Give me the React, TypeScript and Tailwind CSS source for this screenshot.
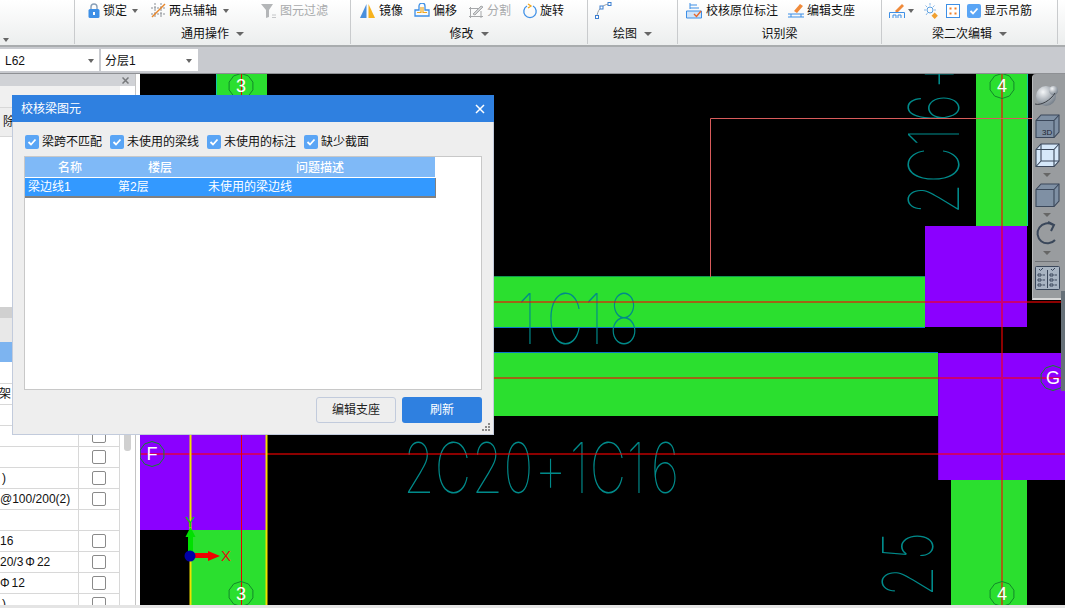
import type { ReactNode } from "react";

const Caret = ({ className = "" }: { className?: string }) => (
  <span className={`inline-block w-0 h-0 border-x-[3px] border-x-transparent border-t-[4px] border-t-[#666] ${className}`} />
);

const Check = ({ className = "" }: { className?: string }) => (
  <span className={`inline-flex w-[14px] h-[14px] shrink-0 items-center justify-center rounded-[2px] bg-[#5aa5f5] ${className}`}>
    <svg width="10" height="10" viewBox="0 0 10 10" fill="none" stroke="#fff" strokeWidth="1.8">
      <path d="M1.5 5l2.5 2.5 4.5-5" />
    </svg>
  </span>
);

const Group = ({ width, label, caret, pad, children }: { width: string; label?: string; caret?: boolean; pad: string; children?: ReactNode }) => (
  <div className={`${width} h-[44px] shrink-0 flex flex-col border-r border-r-[#c9cbcd]`}>
    <div className={`h-[21px] shrink-0 flex items-center ${pad}`}>{children}</div>
    <div className="h-[26px] shrink-0 flex items-center justify-center">
      {label && <span>{label}</span>}
      {caret && <Caret className="ml-[7px] border-x-[4px]" />}
    </div>
  </div>
);

const LockIcon = () => (
  <svg width="12" height="15" viewBox="0 0 12 15">
    <path d="M3 6V4a3 3 0 016 0v2" fill="none" stroke="#8aa0b8" strokeWidth="1.4" />
    <rect x="0.5" y="6" width="11" height="9" rx="1.5" fill="#3d8fe6" />
    <rect x="5" y="9" width="2" height="3" fill="#fff" />
  </svg>
);

const AxisIcon = () => (
  <svg width="15" height="15" viewBox="0 0 15 15" fill="none" strokeWidth="1">
    <path d="M0 5h15M0 11h15M4 0v15M10 0v15" stroke="#8a8f96" strokeDasharray="2 1" />
    <path d="M1 14L14 1" stroke="#e8862a" strokeWidth="1.4" />
  </svg>
);

const FilterIcon = () => (
  <svg width="16" height="16" viewBox="0 0 16 16">
    <path d="M0 1h12L8 7v7l-3 1V7z" fill="#b4b6b8" />
    <path d="M11 12h4M11 14.5h4" stroke="#c4c6c8" />
  </svg>
);

const MirrorIcon = () => (
  <svg width="15" height="15" viewBox="0 0 15 15">
    <path d="M6.5 1v14H0z" fill="#4a8fdc" />
    <path d="M8.5 1v14H15z" fill="#f7b21c" />
  </svg>
);

const OffsetIcon = () => (
  <svg width="16" height="15" viewBox="0 0 16 15" fill="none">
    <path d="M5 7V3a3 3 0 016 0v4h4v6H1V7z" stroke="#3d8fe6" strokeWidth="1.3" />
    <path d="M3 9.5h4V4M9 4v5.5h4" stroke="#f0a820" strokeWidth="1.2" />
  </svg>
);

const SplitIcon = () => (
  <svg width="16" height="15" viewBox="0 0 16 15" fill="none" stroke="#a6a8aa">
    <path d="M1 5.5h11M1 13.5h14M2.5 4v11M13 8v7" />
    <path d="M5 11l8-8 2 1-8 8z" fill="#d0d2d4" />
  </svg>
);

const RotateIcon = () => (
  <svg width="16" height="16" viewBox="0 0 16 16" fill="none">
    <path d="M11 3a6.2 6.2 0 11-6 0" stroke="#3d8fe6" strokeWidth="1.3" />
    <path d="M6 1L9 3 6 5" stroke="#f0a820" strokeWidth="1.3" />
  </svg>
);

const ArcIcon = () => (
  <svg width="17" height="17" viewBox="0 0 17 17" fill="none">
    <path d="M2 15C2 9 6 3 14 2" stroke="#9aa0a6" />
    <rect x="0.5" y="13.5" width="3" height="3" fill="#fff" stroke="#3d7fd0" />
    <rect x="5" y="4" width="3" height="3" fill="#fff" stroke="#3d7fd0" />
    <rect x="13" y="0.5" width="3" height="3" fill="#fff" stroke="#3d7fd0" />
  </svg>
);

const CheckBeamIcon = () => (
  <svg width="16" height="17" viewBox="0 0 16 17" fill="none">
    <path d="M4 1v6M4 3h7M4 6h9" stroke="#3d8fe6" />
    <path d="M0.5 9h15v7H0.5z" fill="#cfe3f8" stroke="#3d8fe6" />
    <path d="M8 12l2.5 2.5L15 9" stroke="#e8662a" strokeWidth="1.4" />
  </svg>
);

const SupportIcon = () => (
  <svg width="16" height="16" viewBox="0 0 16 16" fill="none">
    <path d="M6 8l6-7 3 2-6 7z" fill="#f08a3a" />
    <path d="M0 11h16M0 14h16" stroke="#3d8fe6" />
    <path d="M3 11v3M13 11v3" stroke="#3d8fe6" />
  </svg>
);

const BrushBeamIcon = () => (
  <svg width="16" height="16" viewBox="0 0 16 16" fill="none">
    <path d="M6 8l7-7 2 2-7 7z" fill="#f08a3a" />
    <path d="M0.5 15V9.5h15V15M4 15v-3h3v3M9 15v-3h3v3" stroke="#3d8fe6" />
  </svg>
);

const SparkIcon = () => (
  <svg width="15" height="16" viewBox="0 0 15 16" fill="none">
    <circle cx="7" cy="7" r="3" stroke="#5a9fe0" />
    <path d="M7 0v2.5M1 7H3M11 7h2M2.5 2.5L4 4M11.5 2.5L10 4M3 12l1.5-2" stroke="#8ab8e8" />
    <rect x="9.5" y="10.5" width="4.5" height="4.5" transform="rotate(45 11.7 12.7)" fill="#f0a030" />
  </svg>
);

const DotsIcon = () => (
  <svg width="14" height="14" viewBox="0 0 14 14">
    <rect x="0.5" y="0.5" width="13" height="13" fill="#fff" stroke="#3d8fe6" />
    <rect x="3.5" y="3.5" width="2" height="2" fill="#f0802a" />
    <rect x="8.5" y="3.5" width="2" height="2" fill="#f0802a" />
    <rect x="3.5" y="8.5" width="2" height="2" fill="#f0802a" />
    <rect x="8.5" y="8.5" width="2" height="2" fill="#f0802a" />
  </svg>
);

const Cube = ({ tone, children }: { tone: string; children?: ReactNode }) => (
  <svg width="25" height="24" viewBox="0 0 25 24" fill={tone} stroke="#3a475a" strokeWidth="1.1">
    <path d="M1 6.5L6 1h18v17l-5 5.5H1z" />
    <path d="M1 6.5h18v17M19 6.5L24 1" fill="none" />
    {children}
  </svg>
);

const tableRows: { text?: ReactNode; check?: boolean }[] = [
  {},
  { text: <span className="-ml-[1px]">架</span> },
  {},
  { check: true },
  { check: true },
  { text: <span className="ml-[2px]">)</span>, check: true },
  { text: "@100/200(2)", check: true },
  {},
  { text: "16", check: true },
  { text: <>20/3<span className="mx-[2px]">Φ</span>22</>, check: true },
  { text: <><span className="mr-[2px]">Φ</span>12</>, check: true },
  { text: <span className="ml-[2px]">)</span>, check: true },
];

// the axis bubbles are drawn as ten sided polygons by the CAD view
const bubblePoints = (x: number, y: number) =>
  Array.from({ length: 10 }, (_, i) => {
    const a = (i * Math.PI) / 5 + Math.PI / 10;
    return `${(x + 12.5 * Math.cos(a)).toFixed(1)},${(y + 12.5 * Math.sin(a)).toFixed(1)}`;
  }).join(" ");

const GridCircle = ({ x, y, label }: { x: number; y: number; label: string }) => (
  <g>
    <polygon points={bubblePoints(x, y)} fill="none" stroke="#13882a" />
    <text x={x} y={y + 6} textAnchor="middle" fontSize="18" fill="#fff" className="font-['Liberation_Sans',sans-serif]">{label}</text>
  </g>
);

// centers = middle of each glyph along the baseline, measured from the reference
const CadLabel = ({ x, y, centers, rotate, children }: { x: number; y: number; centers: number[]; rotate?: boolean; children: string }) => (
  <g transform={`translate(${x} ${y}) ${rotate ? "rotate(-90)" : ""} scale(0.72 1)`}>
    <text
      x={centers.map((c) => (c / 0.72).toFixed(1)).join(" ")}
      y="0"
      fontSize="70"
      fill="#008a8a"
      textAnchor="middle"
      className="font-['Inter',sans-serif] font-thin"
    >
      {children}
    </text>
  </g>
);

const CadDrawing = () => (
  <svg className="absolute inset-0 w-full h-full" viewBox="140 74 925 531">
    <rect x="216" y="74" width="51" height="30" fill="#2bdf2f" />
    <rect x="976" y="74" width="51" height="152" fill="#2bdf2f" />
    <rect x="925" y="226" width="102" height="101" fill="#8b00ff" />
    <rect x="494" y="277" width="431" height="50" fill="#2bdf2f" />
    <rect x="494" y="353" width="444" height="63" fill="#2bdf2f" />
    <rect x="938" y="353" width="127" height="127" fill="#8b00ff" />
    <rect x="951" y="480" width="76" height="125" fill="#2bdf2f" />
    <rect x="140" y="430" width="126" height="100" fill="#8b00ff" />
    <rect x="190" y="530" width="76" height="75" fill="#2bdf2f" />

    <path d="M494 327.5H925M494 352.5H938" stroke="#0a78c8" />
    <path d="M494 276.5H925" stroke="#129a50" />
    <path d="M216.5 74V96M1027.5 74V226" stroke="#12c8a8" />
    <path d="M938.5 353V480" stroke="#6a00d8" />

    <CadLabel x={0} y={344} centers={[527, 565, 594, 624]}>1C18</CadLabel>
    <CadLabel x={0} y={493} centers={[419, 453, 487.5, 518.5, 550.5, 579, 608, 636, 665]}>2C20+1C16</CadLabel>
    <CadLabel x={959} y={212} centers={[13, 47, 75, 104, 138]} rotate>2C16+</CadLabel>
    <CadLabel x={933} y={628} centers={[47, 82]} rotate>25</CadLabel>

    <path d="M140 302H1065M140 378H1065M140 454H1065M1002 74V605" stroke="#ff0000" strokeOpacity="0.55" strokeWidth="2" />
    <path d="M241.5 74V605" stroke="#e80000" />
    <path d="M710.5 277V118.5H1040" fill="none" stroke="#d85c5c" />
    <path d="M190.5 430V605M266.5 430V605" stroke="#f0e000" strokeWidth="2" />

    <GridCircle x={241} y={86} label="3" />
    <GridCircle x={1002} y={86} label="4" />
    <GridCircle x={241} y={594} label="3" />
    <GridCircle x={1002} y={594} label="4" />
    <GridCircle x={152} y={454} label="F" />
    <GridCircle x={1053} y={378} label="G" />

    <path d="M188 537h5v18h-5z" fill="#00e000" />
    <path d="M190.5 527l5 10h-10z" fill="#00e000" />
    <path d="M195 553h13v5h-13z" fill="#f00000" />
    <path d="M208 551l12 5-12 5z" fill="#f00000" />
    <circle cx="190" cy="556" r="5.5" fill="#0000a8" />
    <text x="185" y="527" fontSize="15" fill="#00d000" className="font-['Liberation_Sans',sans-serif]">Y</text>
    <text x="221" y="561" fontSize="15" fill="#e01010" className="font-['Liberation_Sans',sans-serif]">X</text>
  </svg>
);

const ViewToolbar = () => (
  <div className="absolute right-0 top-0 w-[33px] h-[226px] bg-[#999c9f] rounded-tl-[4px] border-l border-l-[#b8babc] border-b-2 border-b-[#d8d8d8] flex flex-col items-center pr-[4px] pt-[9px]">
    <svg width="26" height="24" viewBox="0 0 26 24" className="shrink-0">
      <defs>
        <radialGradient id="ball" cx="0.35" cy="0.3" r="0.8">
          <stop offset="0" stopColor="#f4f6f8" />
          <stop offset="1" stopColor="#6a7480" />
        </radialGradient>
      </defs>
      <circle cx="12" cy="13" r="10" fill="url(#ball)" />
      <circle cx="19.5" cy="7.5" r="4.5" fill="url(#ball)" />
      <path d="M1 21c6 2 16-4 20-11" fill="none" stroke="#3a3f46" />
    </svg>
    <div className="mt-[7px] flex shrink-0">
      <Cube tone="#7f90a4">
        <text x="7" y="21" fontSize="8" fill="#1c2530" stroke="none" className="font-['Liberation_Sans',sans-serif]">3D</text>
      </Cube>
    </div>
    <div className="mt-[5px] flex shrink-0">
      <Cube tone="#d6e8fa">
        <path d="M6 1v17h18M6 18L1 23.5" fill="none" />
      </Cube>
    </div>
    <Caret className="mt-[6px] shrink-0 border-x-[4px] border-t-[4px] border-t-[#2f3a48]" />
    <div className="mt-[6px] flex shrink-0">
      <Cube tone="#7f90a4" />
    </div>
    <Caret className="mt-[6px] shrink-0 border-x-[4px] border-t-[4px] border-t-[#2f3a48]" />
    <svg width="24" height="24" viewBox="0 0 24 24" fill="none" stroke="#3a475a" strokeWidth="2" className="mt-[4px] shrink-0">
      <path d="M20 19A10 10 0 1118 4" />
      <path d="M13 1l6 3-3 6" />
    </svg>
    <Caret className="mt-[6px] shrink-0 border-x-[4px] border-t-[4px] border-t-[#2f3a48]" />
    <div className="mt-[6px] w-[24px] h-px shrink-0 bg-[#6f7276]" />
    <svg width="25" height="24" viewBox="0 0 25 24" fill="#a8b4c2" stroke="#3a475a" className="mt-[4px] shrink-0">
      <rect x="0.5" y="0.5" width="24" height="23" rx="1" />
      <path d="M12.5 4v18M4 3l1.5 1.5L8 2M16 3l1.5 1.5L20 2M3 8h3v2H3zM3 13h3v2H3zM3 18h3v2H3zM15 8h3v2h-3zM15 13h3v2h-3zM15 18h3v2h-3zM7.5 9H10M7.5 14H10M7.5 19H10M19.5 9H22M19.5 14H22M19.5 19H22" fill="none" />
    </svg>
  </div>
);

const BeamCheckDialog = () => (
  <div className="absolute left-[12px] top-[95px] z-10 w-[482px] h-[340px] bg-[#eeeeee] border border-[#c2cbdc] border-t-0 flex flex-col">
    <div className="h-[27px] -mx-px shrink-0 bg-[#2f80e0] text-white flex items-center justify-between pl-[9px] pr-[9px]">
      <span>校核梁图元</span>
      <svg width="10" height="10" viewBox="0 0 10 10" stroke="#fff" strokeWidth="1.5"><path d="M1 1l8 8M9 1l-8 8" /></svg>
    </div>
    <div className="flex items-center h-[34px] shrink-0 pl-[12px] pt-[5px]">
      <Check /><span className="ml-[3px] w-[68px]">梁跨不匹配</span>
      <Check /><span className="ml-[3px] w-[80px]">未使用的梁线</span>
      <Check /><span className="ml-[3px] w-[80px]">未使用的标注</span>
      <Check /><span className="ml-[3px]">缺少截面</span>
    </div>
    <div className="mx-[11px] h-[234px] shrink-0 bg-white border border-[#c8c8c8]">
      <div className="grid grid-cols-[90px_90px_230px] w-[410px] h-[20px] pt-px bg-[#7fb9f7] text-white text-center items-center font-medium">
        <span>名称</span>
        <span>楼层</span>
        <span>问题描述</span>
      </div>
      <div className="grid grid-cols-[90px_90px_230px] w-[411px] h-[20px] mt-px bg-[#3399ff] text-white items-center pl-[3px] border-b-2 border-b-[#808080] border-r border-r-[#808080]">
        <span>梁边线1</span>
        <span>第2层</span>
        <span>未使用的梁边线</span>
      </div>
    </div>
    <div className="flex justify-end gap-[6px] mt-[7px] mr-[11px]">
      <button className="w-[80px] h-[26px] rounded-[3px] border border-[#c2cbdc] text-[#222]">编辑支座</button>
      <button className="w-[80px] h-[26px] rounded-[3px] bg-[#2f80e0] text-white">刷新</button>
    </div>
    <svg width="8" height="8" viewBox="0 0 8 8" fill="#8a8a8a" className="absolute right-[3px] bottom-[3px]">
      <path d="M6 0h2v2H6zM3 3h2v2H3zM6 3h2v2H6zM0 6h2v2H0zM3 6h2v2H3zM6 6h2v2H6z" />
    </svg>
  </div>
);

const SidePanel = () => (
  <aside className="w-[140px] shrink-0 h-full bg-white flex flex-col overflow-hidden">
    <div className="w-[136px] h-[12px] shrink-0 bg-[#d0d2d6] border-r border-r-[#c4c4c4] flex items-center justify-end pr-[6px]">
      <svg width="7" height="7" viewBox="0 0 7 7" stroke="#77797c" strokeWidth="1.5"><path d="M0.5 0.5l6 6M6.5 0.5l-6 6" /></svg>
    </div>
    <div className="w-[136px] flex-1 min-h-0 flex border-r border-r-[#c4c4c4]">
      <div className="w-[120px] shrink-0 flex flex-col">
        <div className="h-[22px] shrink-0 bg-[#f0f0f0] border-b border-b-[#d8d8d8]" />
        <div className="h-[29px] shrink-0 bg-[#eeeeee] border-b border-b-[#d8d8d8] flex items-center pl-[3px]">除</div>
        <div className="h-[170px] shrink-0" />
        <div className="h-[11px] shrink-0 bg-[#d0d0d0]" />
        <div className="h-[24px] shrink-0 bg-[#e8e8e8]" />
        <div className="h-[20px] shrink-0 bg-[#7db4f0]" />
        <div className="h-px shrink-0" />
        {tableRows.map((row, i) => (
          <div key={i} className="h-[21px] shrink-0 flex border-b border-b-[#d8d8d8]">
            <div className="w-[79px] shrink-0 overflow-hidden whitespace-nowrap border-r border-r-[#d8d8d8] flex items-center">{row.text}</div>
            <div className="flex-1 flex items-center justify-center border-r border-r-[#d8d8d8]">
              {row.check && <span className="w-[14px] h-[14px] rounded-[2px] border border-[#8a8a8a] bg-white" />}
            </div>
          </div>
        ))}
      </div>
      <div className="flex-1 flex justify-center">
        <div className="mt-[314px] w-[7px] h-[51px] rounded-[3px] bg-[#d0d0d0]" />
      </div>
    </div>
  </aside>
);

export default function App() {
  return (
    <div className="relative w-[1065px] h-[608px] overflow-hidden flex flex-col bg-[#e4e4e4] text-[12px] leading-none text-[#111] font-['Liberation_Sans','Noto_Sans_CJK_SC',sans-serif]">
      <header className="h-[47px] shrink-0 flex bg-gradient-to-b from-white to-[#eceeee] border-b-2 border-b-[#a9acae]">
        <div className="w-[75px] h-[44px] shrink-0 border-r border-r-[#c9cbcd] pt-[32px] pl-[3px]">
          <Caret className="block" />
        </div>
        <Group width="w-[276px]" label="通用操作" caret pad="pl-[13px]">
          <LockIcon />
          <span className="ml-[3px]">锁定</span>
          <Caret className="ml-[5px]" />
          <span className="ml-[13px] flex"><AxisIcon /></span>
          <span className="ml-[3px]">两点辅轴</span>
          <Caret className="ml-[6px]" />
          <span className="ml-[32px] flex"><FilterIcon /></span>
          <span className="ml-[3px] text-[#a8aaac]">图元过滤</span>
        </Group>
        <Group width="w-[237px]" label="修改" caret pad="pl-[9px]">
          <MirrorIcon />
          <span className="ml-[4px]">镜像</span>
          <span className="ml-[11px] flex"><OffsetIcon /></span>
          <span className="ml-[3px]">偏移</span>
          <span className="ml-[11px] flex"><SplitIcon /></span>
          <span className="ml-[3px] text-[#a8aaac]">分割</span>
          <span className="ml-[11px] flex"><RotateIcon /></span>
          <span className="ml-[2px]">旋转</span>
        </Group>
        <Group width="w-[90px]" label="绘图" caret pad="pl-[7px]">
          <ArcIcon />
        </Group>
        <Group width="w-[204px]" label="识别梁" pad="pl-[8px]">
          <CheckBeamIcon />
          <span className="ml-[4px]">校核原位标注</span>
          <span className="ml-[10px] flex"><SupportIcon /></span>
          <span className="ml-[3px]">编辑支座</span>
        </Group>
        <Group width="w-[176px]" label="梁二次编辑" caret pad="pl-[7px]">
          <BrushBeamIcon />
          <Caret className="ml-[3px]" />
          <span className="ml-[9px] flex"><SparkIcon /></span>
          <span className="ml-[8px] flex"><DotsIcon /></span>
          <Check className="ml-[7px]" />
          <span className="ml-[3px]">显示吊筋</span>
        </Group>
      </header>
      <div className="h-[27px] shrink-0 bg-[#c8cacf] border-b border-b-[#8e9094] flex items-center gap-[2px]">
        <div className="w-[99px] h-[22px] bg-white flex items-center justify-between pl-[5px] pr-[5px] pt-px">
          <span>L62</span>
          <Caret />
        </div>
        <div className="w-[97px] h-[22px] bg-white flex items-center justify-between pl-[4px] pr-[6px] pt-px">
          <span>分层1</span>
          <Caret />
        </div>
      </div>
      <main className="relative h-[531px] shrink-0 flex bg-white">
        <SidePanel />
        <div className="relative flex-1 bg-black overflow-hidden">
          <CadDrawing />
          <ViewToolbar />
          <div className="absolute right-0 top-[217px] w-[4px] h-[100px] bg-[#667078]" />
        </div>
      </main>
      <BeamCheckDialog />
    </div>
  );
}
